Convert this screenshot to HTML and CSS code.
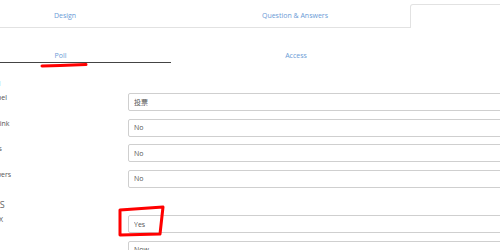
FILE: index.html
```html
<!DOCTYPE html>
<html>
<head>
	<meta charset="utf-8">
	<title>Poll settings</title>
	<link rel="stylesheet" href="styles.css">
</head>
<body>
	<div class="page">
		<ul class="tabs">
			<li class="tab">Design</li>
			<li class="tab">Question &amp; Answers</li>
			<li class="tab active"></li>
		</ul>

		<ul class="subtabs">
			<li class="subtab active">Poll</li>
			<li class="subtab">Access</li>
		</ul>

		<form class="settings">
			<h3 class="section blue">Poll Panel</h3>
			<div class="row">
				<label>Display Label</label>
				<input class="field" value="投票" readonly>
			</div>
			<div class="row">
				<label>Audience Link</label>
				<input class="field" value="No" readonly>
			</div>
			<div class="row">
				<label>Show Votes</label>
				<input class="field" value="No" readonly>
			</div>
			<div class="row">
				<label>Show Answers</label>
				<input class="field" value="No" readonly>
			</div>

			<h3 class="section caps">SETTINGS</h3>
			<div class="row">
				<label>Show LaTeX</label>
				<input class="field" value="Yes" readonly>
			</div>
			<div class="row">
				<label>Start</label>
				<input class="field" value="Now" readonly>
			</div>
		</form>
	</div>

	<!-- red pen marks drawn on the screenshot -->
	<svg class="marks" width="500" height="250" viewBox="0 0 500 250">
		<path d="M42 66 L60 65.5 L86 64.5" stroke="#f00" stroke-width="3" fill="none" stroke-linecap="round"/>
		<path d="M120 210 L163 207 L160 234 L120 235 Z" stroke="#f00" stroke-width="3" fill="none" stroke-linejoin="round"/>
	</svg>
</body>
</html>
```

FILE: styles.css
```css
body {
	margin: 0;
	width: 500px;
	height: 250px;
	overflow: hidden;
	background: #fff;
	font-family: "Open Sans", "Noto Sans CJK SC", sans-serif;
	font-size: 7px;
	color: #555;
}
.page {
	margin-left: -50px;
	width: 700px;
}
ul {
	list-style: none;
	margin: 0;
	padding: 0;
}

/* top tabs */
.tabs {
	display: flex;
	padding-top: 4px;
	border-bottom: 1px solid #e2e2e2;
	width: 460px;
}
.tab {
	width: 230px;
	flex: none;
	height: 23px;
	padding-top: 1px;
	line-height: 22px;
	text-align: center;
	color: #6a9bd6;
	box-sizing: border-box;
}
.tab.active {
	background: #fff;
	border: 1px solid #e2e2e2;
	border-bottom: none;
	border-radius: 3px 3px 0 0;
	height: 24px;
	margin-bottom: -1px;
}

/* poll / access */
.subtabs {
	display: flex;
}
.subtab {
	flex: none;
	width: 250px;
	padding: 23px 0 1px;
	line-height: 10px;
	text-align: center;
	color: #6a9bd6;
	border-bottom: 1px solid transparent;
}
.subtab.active {
	width: 221px;
	border-bottom-color: #444;
}

/* form */
.settings {
	margin: 0;
	padding-left: 14px;
}
.section {
	margin: 15px 0 5px;
	font-size: 8px;
	font-weight: normal;
	line-height: 10px;
	color: #666;
}
.section.blue {
	color: #4a8fd8;
}
.section.caps {
	font-size: 9px;
}
.row ~ .section {
	margin-top: 12.5px;
}
.row {
	display: flex;
	align-items: flex-start;
	margin-bottom: 7.5px;
}
.row label {
	flex: none;
	width: 164px;
	line-height: 10px;
	color: #555;
}
.field {
	flex: none;
	width: 420px;
	height: 18px;
	box-sizing: border-box;
	margin: 0;
	padding: 0 5px;
	border: 1px solid #cfcfcf;
	border-radius: 2px;
	font-family: "Open Sans", "Noto Sans CJK SC", sans-serif;
	font-size: 7px;
	color: #555;
	background: #fff;
	outline: none;
}

.marks {
	position: absolute;
	left: 0;
	top: 0;
	pointer-events: none;
}
```
